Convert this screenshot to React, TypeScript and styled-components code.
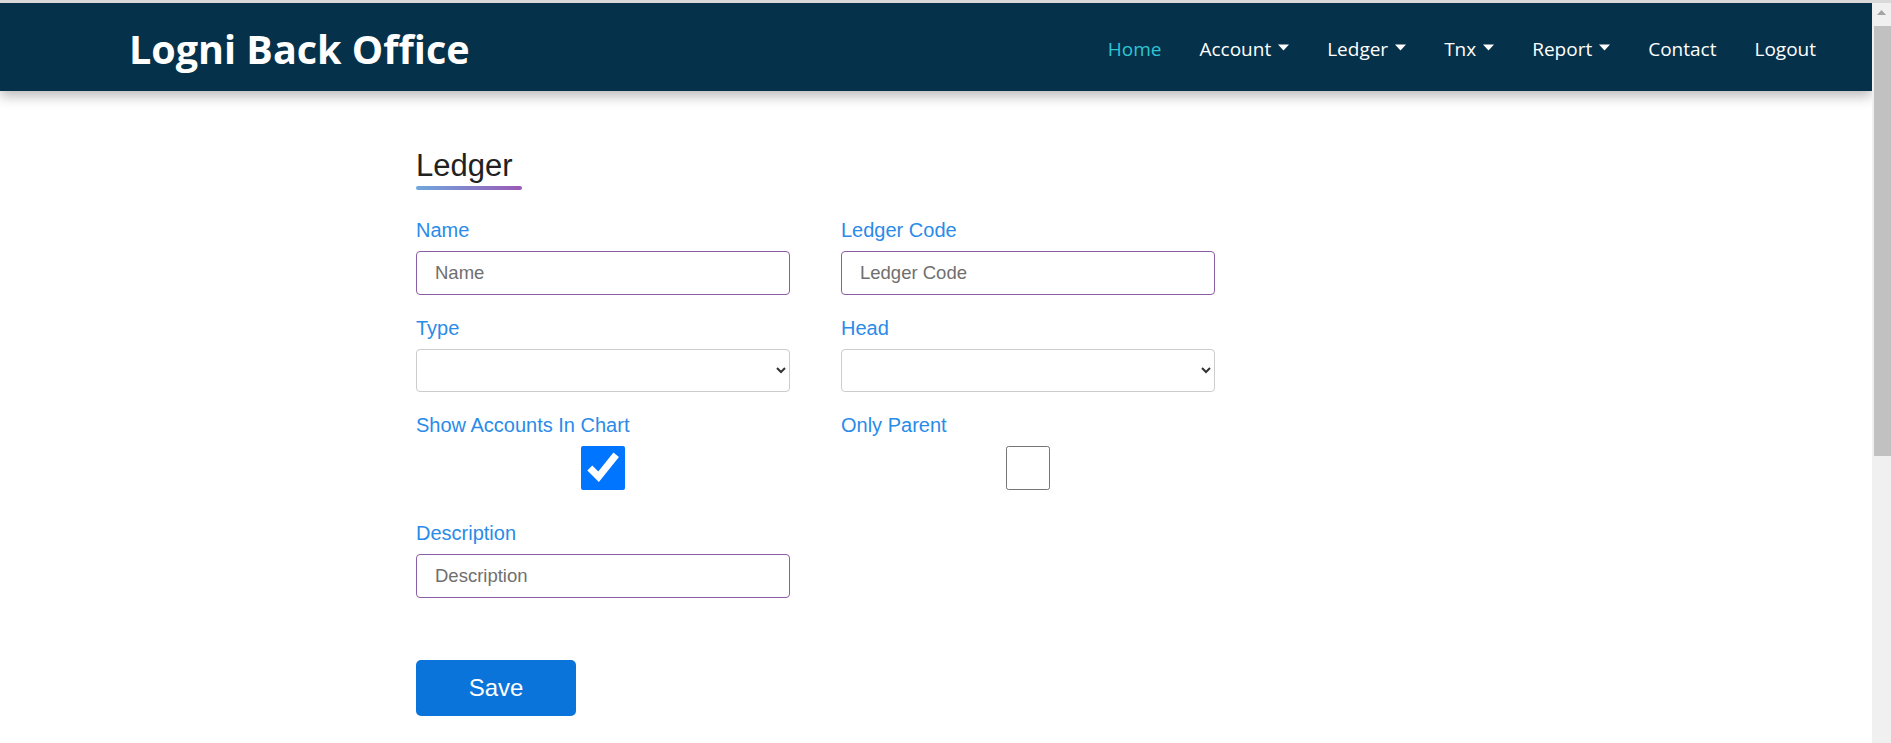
import React from "react";
import styled, { createGlobalStyle } from "styled-components";

const GlobalStyle = createGlobalStyle`
  html, body {
    margin: 0;
    padding: 0;
    height: 100%;
    overflow: hidden;
    background: #ffffff;
  }
  * { box-sizing: border-box; }
`;

const Shell = styled.div`
  display: flex;
  flex-direction: column;
  height: 100vh;
`;

// thin grey strip of the window frame above the page
const TopEdge = styled.div`
  height: 3px;
  flex: none;
  background: #d9d9d9;
`;

const Viewport = styled.div`
  flex: 1;
  display: flex;
  min-height: 0;
`;

const Frame = styled.div`
  flex: 1;
  overflow: hidden;
  background: #ffffff;
`;

// window scrollbar, drawn because the headless browser hides its own
const ScrollRail = styled.div`
  width: 19px;
  flex: none;
  display: flex;
  flex-direction: column;
  background: #f0f0f0;
`;

const ScrollArrow = styled.div`
  height: 19px;
  display: flex;
  align-items: center;
  justify-content: center;
`;

const ScrollThumb = styled.div`
  margin: 4px 0 0 2px;
  height: 430px;
  background: #c1c1c1;
`;

const NavBar = styled.header`
  position: relative;
  z-index: 2;
  height: 88px;
  display: flex;
  align-items: center;
  justify-content: space-between;
  padding: 0 37px 0 129px;
  background: #06314a;
  box-shadow: 0 5px 12px rgba(0, 0, 0, 0.28);
`;

const Brand = styled.div`
  margin-top: 4px;
  font-family: "Open Sans", "Noto Sans", sans-serif;
  font-weight: 700;
  font-size: 39.5px;
  color: #ffffff;
`;

const NavList = styled.nav`
  display: flex;
  align-items: center;
  margin-top: 3px;
`;

const NavLink = styled.a<{ $active?: boolean }>`
  display: flex;
  align-items: center;
  gap: 7px;
  padding: 0 19px;
  font-family: "Open Sans", "Noto Sans", sans-serif;
  font-size: 19px;
  color: ${(p) => (p.$active ? "#2ec5d3" : "#ffffff")};
  text-decoration: none;
  cursor: pointer;
`;

const Caret = () => (
  <svg width="11" height="7" viewBox="0 0 11 7" style={{ marginTop: -2 }}>
    <polygon points="0,0.5 11,0.5 5.5,6.5" fill="#ffffff" />
  </svg>
);

const Main = styled.main`
  padding: 57px 0 0 416px;
  font-family: "Liberation Sans", Arial, sans-serif;
`;

const Heading = styled.h2`
  display: inline-block;
  margin: 0 0 28px;
  font-weight: 400;
  font-size: 31px;
  line-height: 36px;
  color: #212121;

  &::after {
    content: "";
    display: block;
    width: 106px;
    height: 4px;
    margin-top: 2px;
    border-radius: 2px;
    background: linear-gradient(to right, #6fa8dc, #9b59b6);
  }
`;

const FormGrid = styled.div`
  display: grid;
  grid-template-columns: 374px 374px;
  column-gap: 51px;
  row-gap: 21px;
`;

const Field = styled.div<{ $check?: boolean }>`
  display: flex;
  flex-direction: column;
  padding-bottom: ${(p) => (p.$check ? "10px" : "0")};
`;

const Label = styled.label`
  font-size: 20px;
  line-height: 24px;
  color: #2a8be8;
  margin-bottom: 9px;
`;

const TextInput = styled.input`
  height: 44px;
  width: 100%;
  padding: 0 18px;
  border: 1px solid #8a5da6;
  border-radius: 4px;
  font-family: "Liberation Sans", Arial, sans-serif;
  font-size: 18.5px;
  color: #333;
  outline: none;

  &::placeholder {
    color: #6f6f6f;
  }
`;

const Select = styled.select`
  height: 43px;
  width: 100%;
  padding: 0 8px;
  border: 1px solid #cccccc;
  border-radius: 4px;
  background: #ffffff;
  font-family: "Liberation Sans", Arial, sans-serif;
  font-size: 18px;
  color: #333;
`;

const CheckBox = styled.input`
  align-self: center;
  width: 44px;
  height: 44px;
  margin: 0;
`;

const SaveButton = styled.button`
  margin-top: 62px;
  width: 160px;
  height: 56px;
  border: none;
  border-radius: 5px;
  background: #0a74da;
  color: #ffffff;
  font-family: "Liberation Sans", Arial, sans-serif;
  font-size: 24px;
  cursor: pointer;
`;

const menu = [
  { label: "Home", active: true },
  { label: "Account", drop: true },
  { label: "Ledger", drop: true },
  { label: "Tnx", drop: true },
  { label: "Report", drop: true },
  { label: "Contact" },
  { label: "Logout" },
];

export default function App() {
  return (
    <>
      <GlobalStyle />
      <Shell>
        <TopEdge />
        <Viewport>
          <Frame>
            <NavBar>
              <Brand>Logni Back Office</Brand>
              <NavList>
                {menu.map((m) => (
                  <NavLink key={m.label} $active={m.active}>
                    {m.label}
                    {m.drop ? <Caret /> : null}
                  </NavLink>
                ))}
              </NavList>
            </NavBar>

            <Main>
              <Heading>Ledger</Heading>
              <FormGrid>
                <Field>
                  <Label>Name</Label>
                  <TextInput placeholder="Name" />
                </Field>
                <Field>
                  <Label>Ledger Code</Label>
                  <TextInput placeholder="Ledger Code" />
                </Field>

                <Field>
                  <Label>Type</Label>
                  <Select defaultValue="">
                    <option value=""></option>
                  </Select>
                </Field>
                <Field>
                  <Label>Head</Label>
                  <Select defaultValue="">
                    <option value=""></option>
                  </Select>
                </Field>

                <Field $check>
                  <Label>Show Accounts In Chart</Label>
                  <CheckBox type="checkbox" defaultChecked />
                </Field>
                <Field $check>
                  <Label>Only Parent</Label>
                  <CheckBox type="checkbox" />
                </Field>

                <Field>
                  <Label>Description</Label>
                  <TextInput placeholder="Description" />
                </Field>
              </FormGrid>
              <SaveButton>Save</SaveButton>
            </Main>
          </Frame>

          <ScrollRail>
            <ScrollArrow>
              <svg width="9" height="5" viewBox="0 0 9 5">
                <polygon points="0,5 9,5 4.5,0" fill="#a3a3a3" />
              </svg>
            </ScrollArrow>
            <ScrollThumb />
          </ScrollRail>
        </Viewport>
      </Shell>
    </>
  );
}
